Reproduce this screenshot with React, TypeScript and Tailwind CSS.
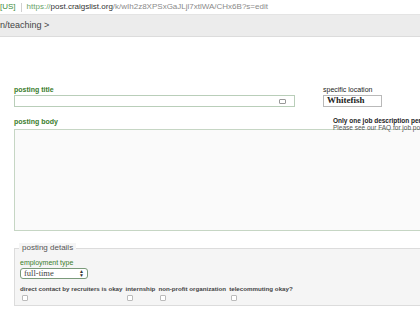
export default function App() {
  const checks = [
    'direct contact by recruiters is okay',
    'internship',
    'non-profit organization',
    'telecommuting okay?',
  ];

  return (
    <div className="w-[420px] h-[320px] overflow-hidden bg-white font-['Liberation_Sans',Arial,sans-serif]">
      {/* address bar */}
      <div className="h-[15px] flex items-center whitespace-nowrap text-[8px] border-b border-[#e4e4e4]">
        <span className="text-[#3c8c3c]">[US]</span>
        <span className="mx-[5px] h-[9px] border-l border-[#d0d0d0]" />
        <span className="text-[#6aa36a]">https://</span>
        <span className="text-[#333]">post.craigslist.org</span>
        <span className="text-[#8a8a8a]">/k/wIh2z8XPSxGaJLjl7xtlWA/CHx6B?s=edit</span>
      </div>

      {/* breadcrumb bar */}
      <div className="h-[22px] bg-[#ececec] border-b border-[#dcdcdc] flex items-center text-[9px] text-[#444]">
        n/teaching &gt;
      </div>

      <div className="pl-[14px] pt-[49px]">
        {/* title + location */}
        <div className="flex items-end">
          <div className="w-[281px]">
            <div className="text-[7px] font-bold text-[#3a7d2c] leading-[8px]">posting title</div>
            <div className="mt-[1px] h-[12px] border border-[#b9ceb9] flex items-center justify-end pr-[8px]">
              <span className="w-[7px] h-[5px] border border-[#999] rounded-[1px]" />
            </div>
          </div>
          <div className="ml-[28px]">
            <div className="text-[7px] text-[#222] leading-[8px]">specific location</div>
            <div className="mt-[1px] w-[59px] h-[12px] border border-[#b9b9b9] flex items-center pl-[3px] font-['Liberation_Serif',serif] font-bold text-[9px] text-[#222]">
              Whitefish
            </div>
          </div>
        </div>

        {/* body label + note */}
        <div className="flex mt-[10px] h-[12px]">
          <div className="w-[319px] shrink-0 pt-[1px] text-[7px] font-bold text-[#3a7d2c] leading-[8px]">posting body</div>
          <div className="pt-[1px] text-[6.5px] leading-[6.5px] whitespace-nowrap">
            <div className="font-bold text-[#222]">Only one job description per posting</div>
            <div className="text-[#555]">Please see our FAQ for job posting</div>
          </div>
        </div>

        <div className="h-[102px] border border-[#c6d6c4] border-r-0 bg-[#fafafa]" />

        {/* posting details */}
        <div className="mt-[17px] h-[58px] border border-[#dcdcdc] border-r-0 bg-[#f5f5f5] relative pl-[5px]">
          <div className="absolute -top-[6px] left-[4px] px-[3px] bg-[#f5f5f5] text-[8px] text-[#555] leading-[10px]">
            posting details
          </div>
          <div className="pt-[10px] text-[7px] text-[#3a7d2c] leading-[8px]">employment type</div>
          <div className="mt-[1px] w-[68px] h-[11px] border border-[#7a9a7a] rounded-[3px] bg-white flex items-center justify-between px-[3px] font-['Liberation_Serif',serif] text-[8.5px] text-[#444]">
            <span>full-time</span>
            <span className="text-[5px] leading-[4px] text-[#333] flex flex-col">
              <span>▲</span>
              <span>▼</span>
            </span>
          </div>
          <div className="flex gap-[3px] mt-[6px]">
            {checks.map((c) => (
              <div key={c} className="flex flex-col">
                <span className="text-[6.2px] font-bold text-[#444] whitespace-nowrap leading-[8px]">{c}</span>
                <span className="mt-[2px] ml-[2px] w-[6px] h-[6px] border border-[#bbb] rounded-[1px] bg-white" />
              </div>
            ))}
          </div>
        </div>
      </div>
    </div>
  );
}
